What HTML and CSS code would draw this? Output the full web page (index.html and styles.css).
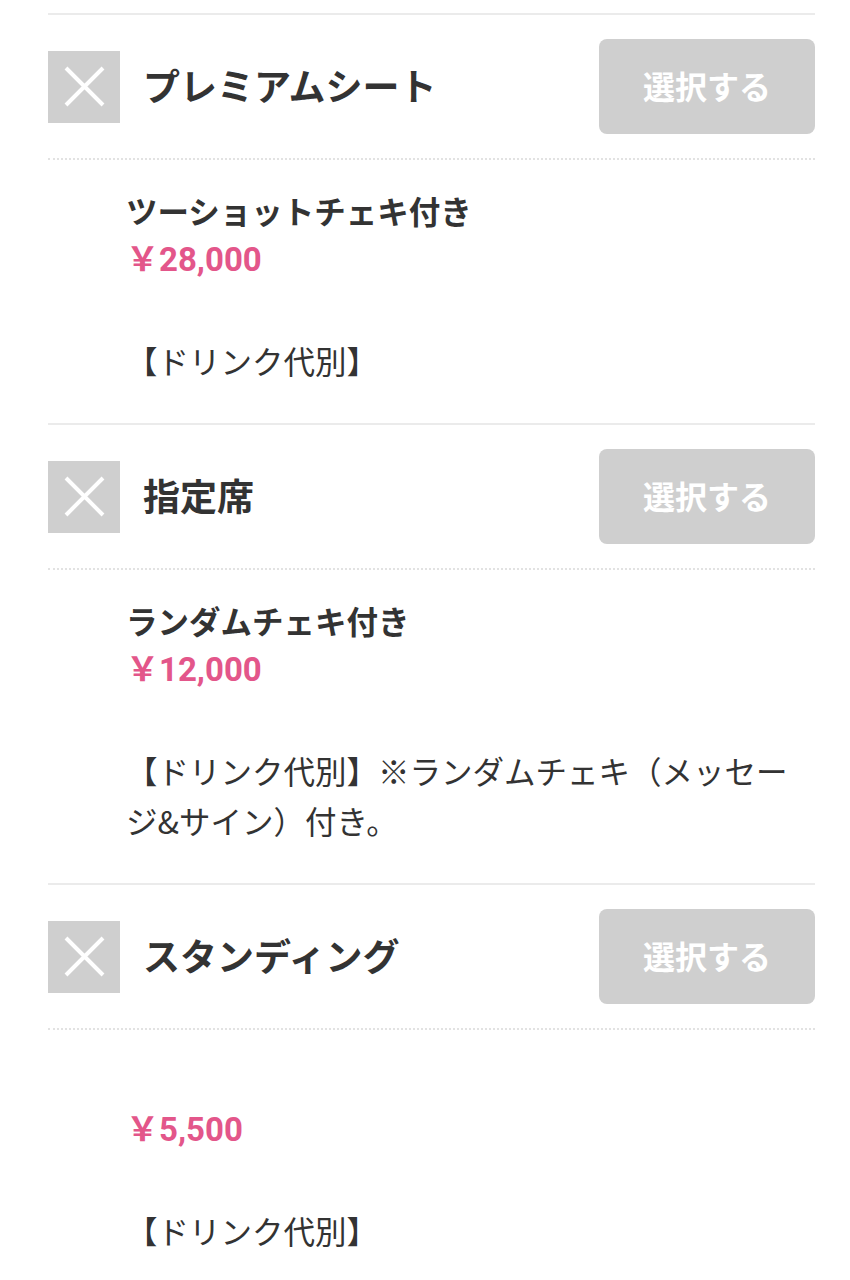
FILE: index.html
```html
<!DOCTYPE html>
<html lang="ja">
<head>
    <meta charset="UTF-8">
    <meta name="viewport" content="width=device-width, initial-scale=1.0">
    <title>チケット選択</title>
    <link rel="stylesheet" href="styles.css">
</head>
<body>
    <div id="ticketList">
        <div class="ticket">
            <div class="ticketHead">
                <span class="closeBox">
                    <svg viewBox="0 0 72 72" width="72" height="72"><path d="M18 17 L55 54 M55 17 L18 54" stroke="#fff" stroke-width="4"/></svg>
                </span>
                <h2 class="ticketName">プレミアムシート</h2>
                <button class="selectBtn" disabled>選択する</button>
            </div>
            <div class="ticketBody">
                <p class="planName">ツーショットチェキ付き</p>
                <p class="price">￥28,000</p>
                <p class="note">【ドリンク代別】</p>
            </div>
        </div>

        <div class="ticket">
            <div class="ticketHead">
                <span class="closeBox">
                    <svg viewBox="0 0 72 72" width="72" height="72"><path d="M18 17 L55 54 M55 17 L18 54" stroke="#fff" stroke-width="4"/></svg>
                </span>
                <h2 class="ticketName">指定席</h2>
                <button class="selectBtn" disabled>選択する</button>
            </div>
            <div class="ticketBody">
                <p class="planName">ランダムチェキ付き</p>
                <p class="price">￥12,000</p>
                <p class="note">【ドリンク代別】※ランダムチェキ（メッセージ&amp;サイン）付き。</p>
            </div>
        </div>

        <div class="ticket">
            <div class="ticketHead">
                <span class="closeBox">
                    <svg viewBox="0 0 72 72" width="72" height="72"><path d="M18 17 L55 54 M55 17 L18 54" stroke="#fff" stroke-width="4"/></svg>
                </span>
                <h2 class="ticketName">スタンディング</h2>
                <button class="selectBtn" disabled>選択する</button>
            </div>
            <div class="ticketBody">
                <p class="planName"></p>
                <p class="price">￥5,500</p>
                <p class="note">【ドリンク代別】</p>
            </div>
        </div>
    </div>
</body>
</html>
```

FILE: styles.css
```css
body {
    margin: 0;
    padding: 0;
    background-color: #ffffff;
    color: #333333;
    font-family: "Noto Sans CJK JP", "Noto Sans", sans-serif;
}

#ticketList {
    margin: 0 35px 0 48px;
    padding-top: 13px;
}

.ticket {
    border-top: 2px solid #ebebeb;
}

.ticketHead {
    display: flex;
    align-items: center;
    padding: 24px 0;
    border-bottom: 2px dotted #e2e2e2;
}

.closeBox {
    display: block;
    width: 72px;
    height: 72px;
    background-color: #cfcfcf;
    flex-shrink: 0;
}

.closeBox svg {
    display: block;
}

.ticketName {
    flex: 1;
    margin: 0 0 4px 23px;
    font-size: 37px;
    font-weight: 700;
    line-height: 50px;
    color: #333333;
}

.selectBtn {
    width: 216px;
    height: 95px;
    border: none;
    border-radius: 8px;
    background-color: #cfcfcf;
    color: #ffffff;
    font-family: "Noto Sans CJK JP", sans-serif;
    font-size: 32px;
    font-weight: 700;
    padding: 0 0 4px;
}

.ticketBody {
    padding: 25px 0 38px 78px;
}

.ticketBody p {
    margin: 0;
    line-height: 50px;
    min-height: 50px;
}

.planName {
    font-size: 31.5px;
    font-weight: 700;
}

.price {
    font-family: Roboto, "Noto Sans CJK JP", sans-serif;
    font-size: 33px;
    font-weight: 700;
    color: #e3568a;
}

.ticketBody .note {
    margin-top: 50px;
    font-size: 31.5px;
    font-weight: 400;
}
```
